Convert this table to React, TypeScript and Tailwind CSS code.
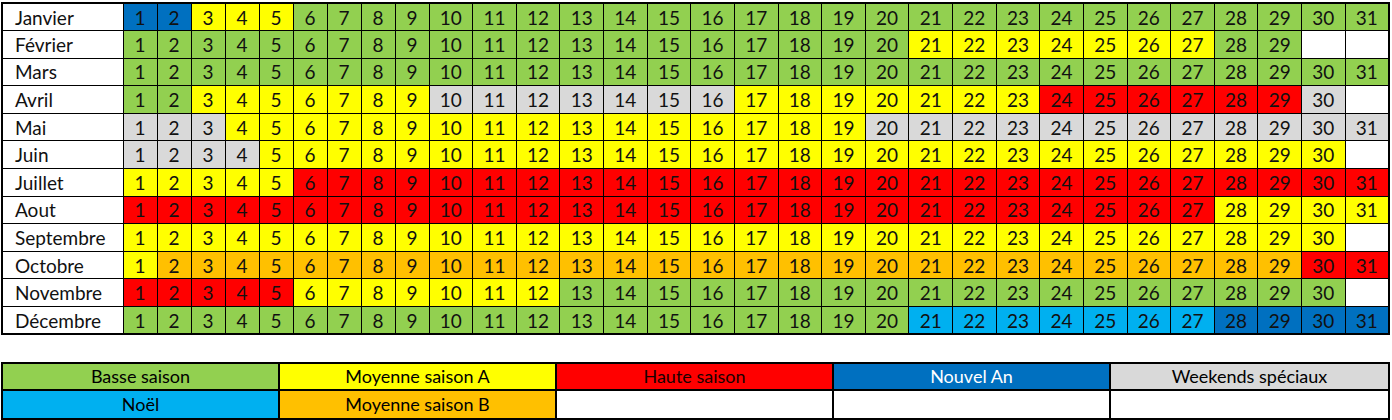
import React from 'react';

// Season calendar: one row per month, one cell per day, coloured by tariff.

type Code = 'G' | 'Y' | 'R' | 'N' | 'L' | 'S' | 'O' | '-';

const FILL: Record<Code, string> = {
  G: 'bg-[#92d050]',
  Y: 'bg-[#ffff00]',
  R: 'bg-[#ff0000]',
  N: 'bg-[#0070c0]',
  L: 'bg-[#00b0f0]',
  S: 'bg-[#d9d9d9]',
  O: 'bg-[#ffc000]',
  '-': 'bg-white',
};

function run(...parts: Array<[Code, number]>): Code[] {
  const out: Code[] = [];
  parts.forEach(([c, n]) => {
    for (let i = 0; i < n; i++) out.push(c);
  });
  return out;
}

const MONTHS: Array<{ name: string; days: Code[] }> = [
  { name: 'Janvier', days: run(['N', 2], ['Y', 3], ['G', 26]) },
  { name: 'Février', days: run(['G', 20], ['Y', 7], ['G', 2], ['-', 2]) },
  { name: 'Mars', days: run(['G', 31]) },
  { name: 'Avril', days: run(['G', 2], ['Y', 7], ['S', 7], ['Y', 7], ['R', 6], ['S', 1], ['-', 1]) },
  { name: 'Mai', days: run(['S', 3], ['Y', 16], ['S', 12]) },
  { name: 'Juin', days: run(['S', 4], ['Y', 26], ['-', 1]) },
  { name: 'Juillet', days: run(['Y', 5], ['R', 26]) },
  { name: 'Aout', days: run(['R', 27], ['Y', 4]) },
  { name: 'Septembre', days: run(['Y', 30], ['-', 1]) },
  { name: 'Octobre', days: run(['Y', 1], ['O', 28], ['R', 2]) },
  { name: 'Novembre', days: run(['R', 5], ['Y', 7], ['G', 18], ['-', 1]) },
  { name: 'Décembre', days: run(['G', 20], ['L', 7], ['N', 4]) },
];

const LEGEND: Array<{ label: string; cls: string }> = [
  { label: 'Basse saison', cls: 'bg-[#92d050] text-black' },
  { label: 'Moyenne saison A', cls: 'bg-[#ffff00] text-black' },
  { label: 'Haute saison', cls: 'bg-[#ff0000] text-[#1a0000]' },
  { label: 'Nouvel An', cls: 'bg-[#0070c0] text-white' },
  { label: 'Weekends spéciaux', cls: 'bg-[#d9d9d9] text-black' },
  { label: 'Noël', cls: 'bg-[#00b0f0] text-black' },
  { label: 'Moyenne saison B', cls: 'bg-[#ffc000] text-black' },
  { label: '', cls: 'bg-white' },
  { label: '', cls: 'bg-white' },
  { label: '', cls: 'bg-white' },
];

export default function App() {
  const dayNums = Array.from({ length: 31 }, (_, i) => i + 1);
  return (
    <div className="h-[420px] w-[1392px] bg-white pl-px pt-[2px] font-['Lato','Open_Sans',sans-serif] text-[19px] text-[#111]">
      <table className="w-[1389px] table-fixed border-collapse border-2 border-black">
        <colgroup>
          <col className="w-[121px]" />
          {dayNums.map((d) => (
            <col key={d} className={d < 10 ? 'w-[34px]' : ''} />
          ))}
        </colgroup>
        <tbody>
          {MONTHS.map((m) => (
            <tr key={m.name} className="h-[27.6px]">
              <td className="overflow-hidden whitespace-nowrap border border-black bg-white pl-[12px] text-left leading-none">
                {m.name}
              </td>
              {m.days.map((c, i) => (
                <td
                  key={i}
                  className={`border border-black p-0 text-center leading-none ${FILL[c]}`}
                >
                  {c === '-' ? '' : i + 1}
                </td>
              ))}
            </tr>
          ))}
        </tbody>
      </table>

      <div className="mt-[27px] grid w-[1389px] grid-cols-5 border-2 border-black">
        {LEGEND.map((l, i) => (
          <div
            key={i}
            className={`flex h-[27px] items-center justify-center border-black text-[18px] ${l.cls} ${
              i % 5 !== 4 ? 'border-r-2' : ''
            } ${i < 5 ? 'border-b-2' : ''}`}
          >
            {l.label}
          </div>
        ))}
      </div>
    </div>
  );
}
